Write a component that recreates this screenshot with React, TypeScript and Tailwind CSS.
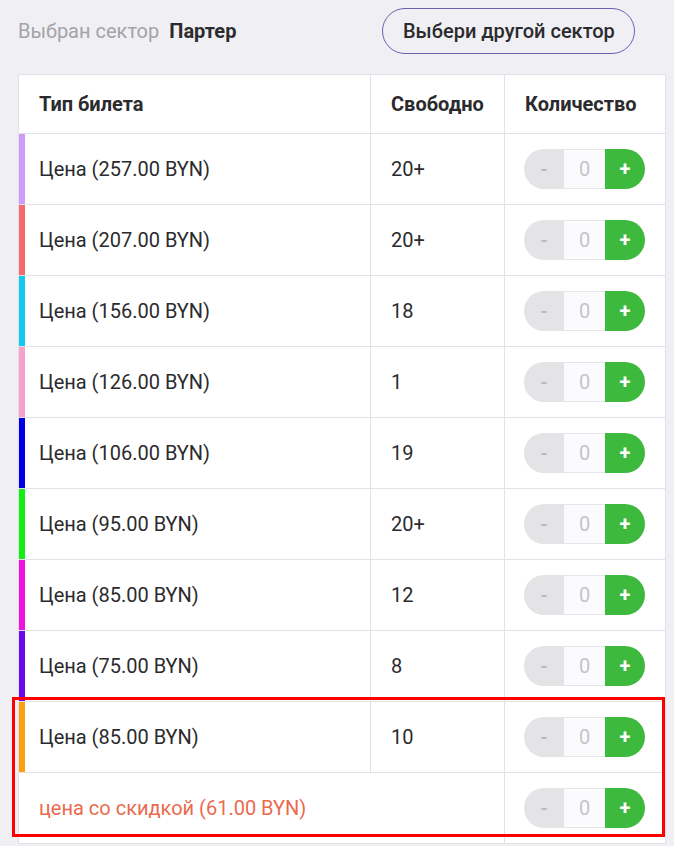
import React from "react";

const rows = [
  { color: "#cc9cf8", label: "Цена (257.00 BYN)", free: "20+" },
  { color: "#f46a6a", label: "Цена (207.00 BYN)", free: "20+" },
  { color: "#12c8ee", label: "Цена (156.00 BYN)", free: "18" },
  { color: "#f6a2cc", label: "Цена (126.00 BYN)", free: "1" },
  { color: "#0000e6", label: "Цена (106.00 BYN)", free: "19" },
  { color: "#12ee12", label: "Цена (95.00 BYN)", free: "20+" },
  { color: "#f010e0", label: "Цена (85.00 BYN)", free: "12" },
  { color: "#6a08f0", label: "Цена (75.00 BYN)", free: "8" },
];

function Stepper() {
  return (
    <div className="flex h-[40px] w-[121px] items-stretch">
      <div className="flex w-[40px] items-center justify-center rounded-l-full bg-[#e4e4e7] text-[18px] font-bold text-[#b9b9be]">
        -
      </div>
      <div className="flex w-[41px] items-center justify-center border-y border-[#e6e6ea] bg-[#fbfbfd] text-[20px] text-[#c4c4c9]">
        0
      </div>
      <div className="flex w-[40px] items-center justify-center rounded-r-full bg-[#3dba3e] text-[20px] font-bold text-white">
        +
      </div>
    </div>
  );
}

function Row({ color, label, free }: { color: string; label: string; free: string }) {
  return (
    <div className="flex h-[71px] border-t border-[#e2e2e6]">
      <div className="flex w-[351px] items-center">
        <div className="h-full w-[6px]" style={{ backgroundColor: color }} />
        <div className="pl-[14px] text-[20px] text-[#2b2b2e]">{label}</div>
      </div>
      <div className="flex w-[134px] items-center border-l border-[#e2e2e6] pl-[20px] text-[20px] text-[#2b2b2e]">
        {free}
      </div>
      <div className="flex flex-1 items-center border-l border-[#e2e2e6] pl-[19px]">
        <Stepper />
      </div>
    </div>
  );
}

export default function App() {
  return (
    <div
      className="min-h-[846px] w-[674px] overflow-hidden bg-[#f0f0f4]"
      style={{ fontFamily: "Roboto, 'Noto Sans', sans-serif" }}
    >
      <div className="flex h-[62px] items-center pl-[18px]">
        <span className="text-[20px] text-[#a3a3a8]">Выбран сектор</span>
        <span className="ml-[10px] text-[20px] font-bold text-[#2b2b2e]">Партер</span>
        <button className="ml-[146px] h-[46px] w-[253px] rounded-full border border-[#6b5fb0] text-[20px] font-medium text-[#2b2b2e]">
          Выбери другой сектор
        </button>
      </div>
      <div className="ml-[18px] mt-[12px] w-[648px] border border-[#e2e2e6] bg-white">
        <div className="flex h-[58px] text-[20px] font-bold text-[#2b2b2e]">
          <div className="flex w-[351px] items-center pl-[20px]">Тип билета</div>
          <div className="flex w-[134px] items-center border-l border-[#e2e2e6] pl-[20px]">Свободно</div>
          <div className="flex flex-1 items-center border-l border-[#e2e2e6] pl-[20px]">Количество</div>
        </div>
        {rows.map((r) => (
          <Row key={r.label + r.free} {...r} />
        ))}
        <div className="relative">
          <Row color="#fba010" label="Цена (85.00 BYN)" free="10" />
          <div className="flex h-[71px] border-t border-[#e2e2e6]">
            <div className="flex w-[485px] items-center pl-[20px] text-[20px] text-[#ea6a4e]">
              цена со скидкой (61.00 BYN)
            </div>
            <div className="flex flex-1 items-center border-l border-[#e2e2e6] pl-[19px]">
              <Stepper />
            </div>
          </div>
          <div className="pointer-events-none absolute left-[-7px] top-[-4px] h-[140px] w-[653px] border-[3px] border-[#ff0000]" />
        </div>
      </div>
    </div>
  );
}
